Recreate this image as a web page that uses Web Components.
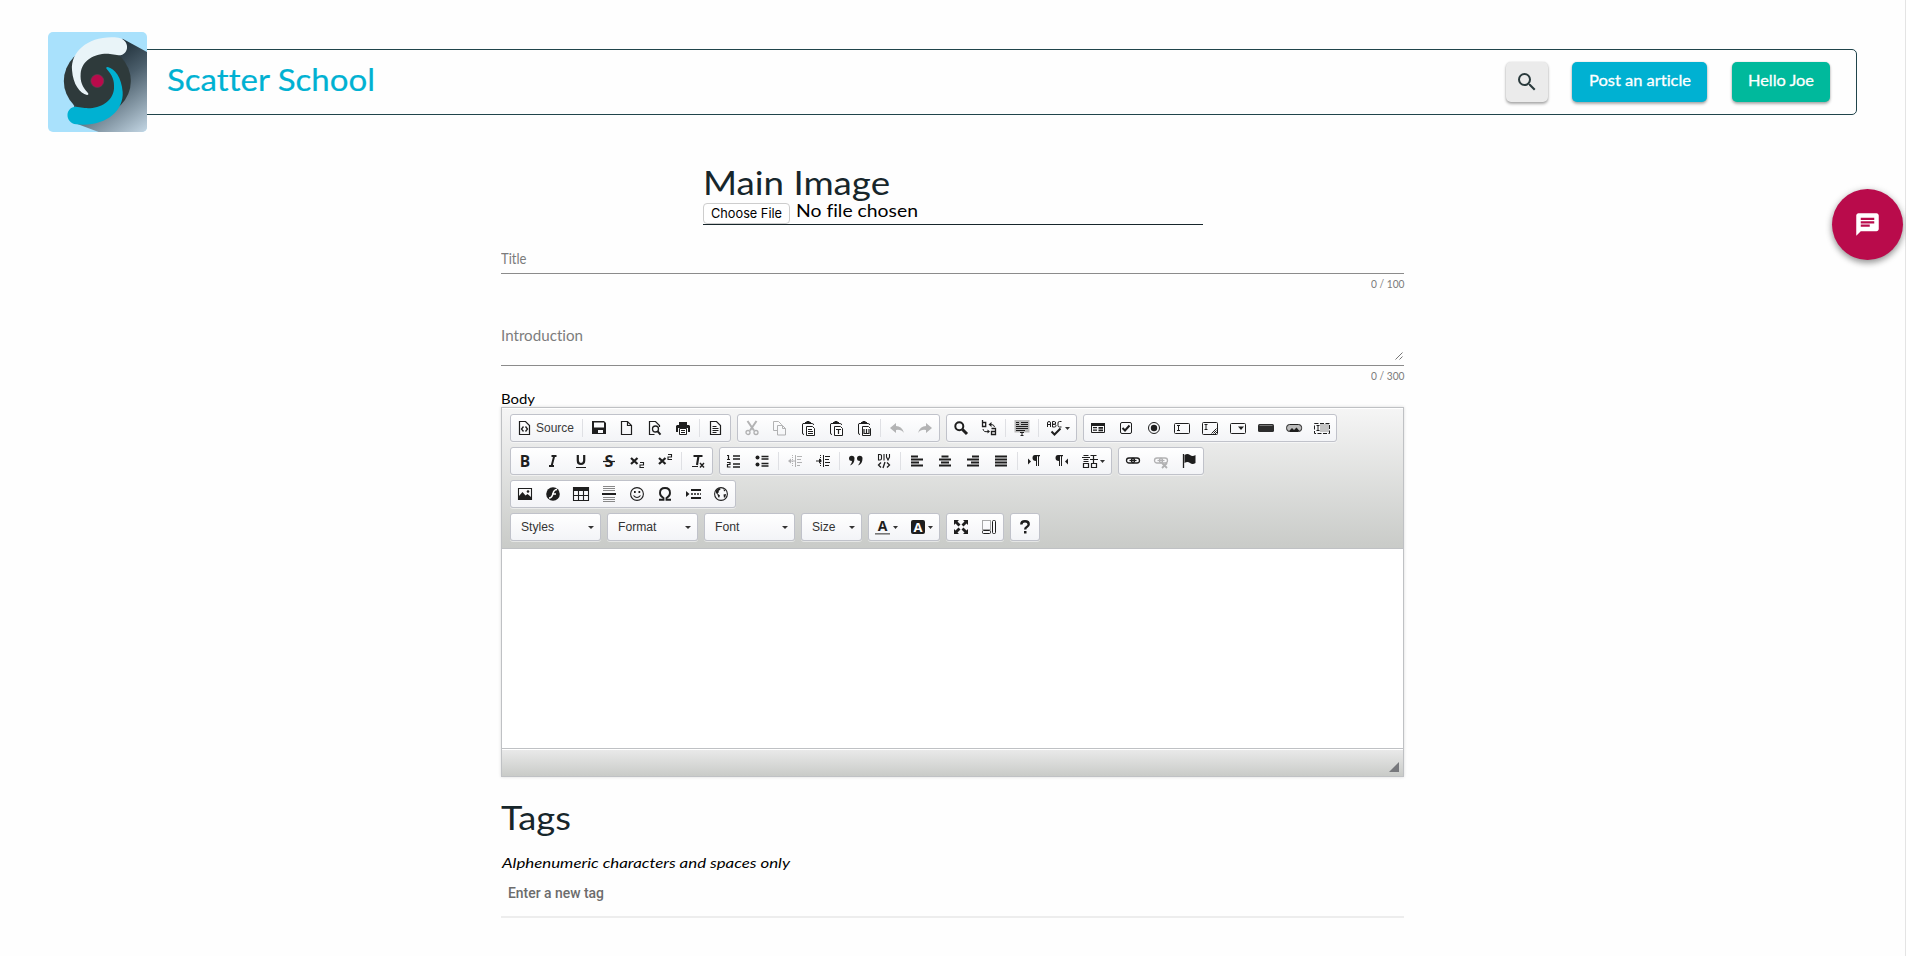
<!DOCTYPE html>
<html lang="en">
<head>
<meta charset="utf-8">
<title>Scatter School</title>
<style>
html,body{margin:0;height:100%;overflow:hidden;background:#fefefe}
body{font-family:"Century Gothic",Lato,sans-serif;font-variant-ligatures:none;color:#000}
</style>
</head>
<body>
<scatter-page></scatter-page>
<script>
const define = (name, html, init) => customElements.define(name, class extends HTMLElement {
  connectedCallback() {
    if (this.shadowRoot) return;
    this.attachShadow({mode: 'open'}).innerHTML = typeof html === 'function' ? html(this) : html;
    if (init) init(this);
  }
});

/* Text whose letters are widened to fill a given width. */
define('fit-text', '<style>:host{display:inline-block;white-space:nowrap;text-align:left;font-variant-ligatures:none}span{display:inline-block;transform-origin:0 50%}</style><span><slot></slot></span>', el => {
  const span = el.shadowRoot.querySelector('span');
  const width = Number(el.getAttribute('width'));
  const ratio = width / span.getBoundingClientRect().width;
  el.style.width = width + 'px';
  span.style.transform = `scaleX(${ratio.toFixed(4)})`;
});

define('site-logo', `<style>:host{display:block;width:99px;height:100px}svg{display:block;border-radius:5px}</style>
<svg width="99" height="100" viewBox="54 36 297 300">
<defs><linearGradient id="s" x1="200" y1="120" x2="350" y2="335" gradientUnits="userSpaceOnUse"><stop offset="0" stop-color="#1f2f39"/><stop offset=".35" stop-color="#4a5d6a"/><stop offset="1" stop-color="#c3d6e4"/></linearGradient>
<path id="arm" d="M265 53C180 44 122 92 126 150C129 194 150 220 171 225C177 225 176 221 172 217C158 200 150 188 152 160C156 118 200 98 240 102L266 106C300 105 300 58 265 53Z"/></defs>
<path fill="#a9e1fc" d="M54 36h297v300H54z"/>
<path fill="url(#s)" d="M278 56L351 96V336H206L140 311L120 180Z"/>
<circle cx="202" cy="183" r="100.500" fill="#2e3a3b"/>
<use href="#arm" fill="#e9f4f8"/><use href="#arm" fill="#00b1d2" transform="rotate(180 202 183)"/>
<circle cx="202" cy="183" r="19.500" fill="#ba0a4b" stroke="#5d4650" stroke-width="2"/>
</svg>`);

define('raised-button', `<style>
:host{display:flex;align-items:center;justify-content:center;box-sizing:border-box;height:40px;border-radius:5px;color:#fff;
font-size:15.500px;font-weight:400;-webkit-text-stroke:.3px currentColor;line-height:20px;box-shadow:0 2px 3px rgba(0,0,0,.32),0 0 2px rgba(0,0,0,.14)}
::slotted(fit-text){margin-bottom:4px}
</style><slot></slot>`);

define('site-header', `<style>
:host{display:flex;align-items:center;box-sizing:border-box;width:1809px;height:66px;border:1px solid #20444b;border-radius:5px;padding-right:26px}
site-logo{margin-left:-1px;flex:none}
h1{margin:0 0 6px 20px;font-size:31px;line-height:40px;font-weight:400;color:#00b1d2;flex:1;-webkit-text-stroke:.2px #00b1d2}
nav{display:flex}
.search{width:42px;background:#ebebeb;margin-right:24px}
.post{width:135px;background:#00b1d2;margin-right:25px}
.user{width:98px;background:#00b99c}
</style>
<site-logo></site-logo>
<h1><fit-text width="208">Scatter School</fit-text></h1>
<nav>
<raised-button class="search"><svg width="24" height="24" viewBox="0 0 24 24"><path fill="#2b3b3d" d="M15.500 14h-.790l-.280-.270A6.470 6.470 0 0 0 16 9.500 6.500 6.500 0 1 0 9.500 16c1.610 0 3.090-.590 4.230-1.570l.270.280v.790l5 4.990L20.490 19l-4.990-5zm-6 0C7.010 14 5 11.990 5 9.500S7.010 5 9.500 5 14 7.010 14 9.500 11.990 14 9.500 14z"/></svg></raised-button>
<raised-button class="post"><fit-text width="102">Post an article</fit-text></raised-button>
<raised-button class="user"><fit-text width="66">Hello Joe</fit-text></raised-button>
</nav>`);

define('chat-fab', `<style>
:host{display:flex;align-items:center;justify-content:center;width:71px;height:71px;border-radius:50%;background:#b90b4b;box-shadow:0 3px 6px rgba(0,0,0,.36),0 1px 8px rgba(0,0,0,.12)}
</style><svg width="27" height="27" viewBox="0 0 24 24"><path fill="#fff" d="M20 2H4c-1.100 0-1.990.900-1.990 2L2 22l4-4h14c1.100 0 2-.900 2-2V4c0-1.100-.900-2-2-2zM6 9h12v2H6V9zm8 5H6v-2h8v2zm4-6H6V6h12v2z"/></svg>`);

define('image-upload', `<style>
:host{display:block;width:500px;border-bottom:1px solid #17262b}
h2{margin:-1px 0 1px;font-size:33px;line-height:40px;font-weight:400;color:#17262b}
.row{display:flex;height:21px}
.btn{box-sizing:border-box;width:87px;height:21px;border:1px solid #cdcdcd;border-radius:4px;background:#fff;text-align:center;font:13px/19px Inter,sans-serif;color:#000}
.name{margin:-1px 0 0 6px;font-size:17.500px;line-height:18px}
</style>
<h2><fit-text width="187">Main Image</fit-text></h2>
<div class="row"><div class="btn"><fit-text width="71">Choose File</fit-text></div><div class="name"><fit-text width="122">No file chosen</fit-text></div></div>`);

define('text-field', el => `<style>
:host{display:block}
.box{box-sizing:border-box;height:${el.getAttribute('height')}px;border-bottom:1px solid #8b8b8b;font-size:14.500px;line-height:24px;color:#7c7c7c;display:flex;justify-content:space-between;align-items:flex-start}
.grip{align-self:flex-end;margin:0 1px 5px 0}
.count{margin-top:2px;text-align:right;font-size:10.800px;line-height:16px;color:#7c7c7c}
</style>
<div class="box"><fit-text width="${el.getAttribute('w')}">${el.getAttribute('label')}</fit-text>${el.hasAttribute('resizable') ? '<svg class="grip" width="8" height="8" viewBox="0 0 8 8"><path d="M.500 7.500l7-7M4.500 7.500l3-3" stroke="#666" stroke-width=".900"/></svg>' : ''}</div>
<div class="count"><fit-text width="33.500">0 / ${el.getAttribute('max')}</fit-text></div>`);

/* 16x16 toolbar glyphs */
const S = (d, w = 1) => `<path d="${d}" fill="none" stroke="currentColor" stroke-width="${w}"/>`;
const F = (d, x = '') => `<path d="${d}" fill="currentColor" ${x}/>`;
const doc = S('M2.500 1.500h6l4 4v9h-10zM8.500 1.500v4h4', 1.2);
const clip = S('M5 3.500H3Q2.500 3.500 2.500 5v8Q2.500 14.500 4 14.500M11 3.500h1.500Q13.500 3.500 13.500 5') + F('M5 2h1.500V1h3v1H11v2H5z') + '<path d="M6.500 6.500h6l2 2v7h-8z" fill="#fff" stroke="currentColor"/>';
const T = (x, y, size, t, extra = '') => `<text x="${x}" y="${y}" font-size="${size}" fill="currentColor" text-anchor="middle" ${extra}>${t}</text>`;
const link = '<rect x="1.500" y="5" width="8" height="5" rx="2.500" fill="none" stroke="currentColor" stroke-width="1.300"/><rect x="6.500" y="5" width="8" height="5" rx="2.500" fill="none" stroke="currentColor" stroke-width="1.300"/>' + S('M4.500 7.500h7', 1.2);
const pil = F('M8 2h6v1.200h-1V13h-1V3.200h-1V13h-1V8Q6.500 8 6.500 5 6.500 2 9 2z');
const ICONS = {
  source: S('M2.500 1.500h6l4 4v9h-10z', 1.2) + S('M6.500 6.500L4.500 9l2 2.500M8.500 6.500l2 2.500-2 2.500', 1.3),
  save: F('M1 1h12l2 2v11H1zM3 2.500v5h10v-5zM4 10v3h8v-3z', 'fill-rule="evenodd"') + F('M4 10h3v4H4z'),
  newpage: doc,
  preview: S('M12.500 7V5.500l-4-4h-6v13h5', 1.2) + '<circle cx="8.500" cy="9" r="3" fill="none" stroke="currentColor" stroke-width="1.300"/>' + S('M10.500 11.200l3 3.500', 2),
  print: F('M4 2h8v3H4zM2 5h12l1 1v6h-2V8H3v4H1V6z') + '<path d="M4.500 8.500h7v6h-7z" fill="#fff" stroke="currentColor"/>' + S('M6 10.500h4M6 12.500h4'),
  templates: S('M2.500 1.500h6l4 4v9h-10z', 1.2) + S('M4.500 6.500h4M4.500 8.500h6M4.500 10.500h6M4.500 12.500h4'),
  cut: S('M3.500 1l6.500 9.500M12.500 1L6 10.500', 2) + '<circle cx="4" cy="12.500" r="2" fill="none" stroke="currentColor" stroke-width="1.300"/><circle cx="12" cy="12.500" r="2" fill="none" stroke="currentColor" stroke-width="1.300"/>',
  copy: S('M5.500 10.500h-4v-9h5l3 3v1') + S('M5.500 5.500h5l3 3v6.500h-8zM10.500 5.500v3h3'),
  paste: clip + S('M8 9.500h4M8 11.500h5M8 13.500h5'),
  pastetext: clip + S('M8 9.500h5M10.500 9v5', 1.2),
  pasteword: clip + S('M8 9v4.500h5V9M10.500 9v4', 1.2),
  undo: F('M1 8l6-5v3q6 0 8 7-3-4-8-3v3z'),
  redo: F('M15 8L9 3v3q-6 0-8 7 3-4 8-3v3z'),
  find: '<circle cx="6.300" cy="6.300" r="4" fill="none" stroke="currentColor" stroke-width="2"/>' + S('M9.500 9.500l4.500 4.500', 3),
  replace: S('M1.500 0v6.500h3.200v-4H1.500M10.500 8.500h4v6h-4v-3h4', 1.3) + S('M8.500 4.500h2q2.500 0 3 2.500M2 9q.500 3.500 5 2.500') + F('M7.500 4.500l3-2.500v5zM9 11.500L6.500 9.500v4z'),
  selectall: '<path d="M.500 0h15v12.500H.500z" fill="#bbb"/>' + S('M2 2.500h3M2 4.500h3M7 2.500h7M7 4.500h7M2 6.500h12M2 8.500h12M2 10.500h9', 1.1) + S('M6 12.500h4M8 12.500v3M6.500 15.500h3'),
  spell: S('M.500 7V3q0-1.500 1.500-1.500T3.500 3v4M.500 4.500h3M5.500 1.500v5.500h2q1.500 0 1.500-1.300T7.500 4.300h-2 1.700Q8.700 4.300 8.700 3T7.300 1.500zM14.500 1.500h-2q-1.500 0-1.500 1.500v2.500Q11 7 12.500 7h2') + S('M4.500 11.500l3 3 6-6', 2),
  form: S('M1.500 3.500h13v9h-13z') + F('M1 3h14v3H1z') + F('M3 7h4v1.200H3zM3 9.500h4v1.200H3zM8.500 7H13v1.700H8.500zM8.500 9.500H13v1.700H8.500z'),
  checkbox: '<rect x="2.500" y="2.500" width="11" height="11" rx="1.500" fill="none" stroke="currentColor"/>' + S('M4.500 8l2.500 2.500 4.500-5', 2),
  radio: '<circle cx="8" cy="8" r="5.500" fill="none" stroke="currentColor"/><circle cx="8" cy="8" r="3.200" fill="currentColor"/>',
  textfield: '<rect x=".500" y="3.500" width="15" height="10" rx="1" fill="none" stroke="currentColor"/>' + S('M3 5.500h3M4.500 5.500v5M3 10.500h3'),
  textarea: '<rect x=".500" y="2.500" width="15" height="12" rx="1" fill="none" stroke="currentColor"/>' + S('M2.500 4.500h3M4 4.500v5M2.500 9.500h3M9.500 13.500l5-5M11.500 13.500l3-3M13 14l2-2'),
  select: '<rect x=".500" y="3.500" width="15" height="10" rx="1" fill="none" stroke="currentColor"/>' + F('M8 6.500h6L11 10z'),
  button: '<rect x="0" y="4" width="16" height="8" rx="1.500" fill="#2c2c2c"/><path d="M1.500 5.500h13" stroke="#777"/>',
  imagebutton: '<rect x=".600" y="4.500" width="15" height="7" rx="3" fill="#bbb" stroke="currentColor"/>' + F('M3 11l3-3 2 2 2.500-2.500 3 3.500z'),
  hidden: '<path d="M6 4h9v8H6z" fill="#c4c4c4"/><rect x=".500" y="3.500" width="15" height="10" fill="none" stroke="currentColor" stroke-dasharray="4 1.500"/>' + S('M2.500 5.500h3M4 5.500v5M2.500 10.500h3'),
  bold: T(8, 13.5, 15.5, 'B', 'font-weight="700" font-family="Open Sans"'),
  italic: S('M6.500 3h5M9.200 3L6.600 13M4 13h5', 2),
  underline: S('M4.800 2v5.500Q4.800 11 8 11t3.200-3.500V2', 2.2) + S('M3 14.500h10'),
  strike: T(8, 13.5, 16, 'S', 'font-weight="700" font-family="Open Sans"') + S('M2 8.500h12', 1.2),
  sub: S('M2 5l6.500 6M8.500 5L2 11', 2.2) + S('M11 9.500h3.500v2.500h-3.500v2.500h4', 1.1),
  sup: S('M2 5l6.500 6M8.500 5L2 11', 2.2) + S('M11 1.500h3.500V4h-3.500v2.500h4', 1.1),
  removefmt: S('M3.500 3h9M8.500 3L7 12', 2.1) + S('M2 13.500h6') + S('M10 10l4 4.500M14 10l-4 4.500', 1.4),
  numbered: S('M1 2.500h1.500V6.500M1 6.500h3M1 9.500h3v2H1.500v2.500h3', 1.2) + S('M7 3h7M7 6h7M7 11h7M7 14h7', 1.4),
  bulleted: '<circle cx="3.500" cy="4.500" r="2" fill="currentColor"/><circle cx="3.500" cy="11.500" r="2" fill="currentColor"/>' + S('M7.500 3.500h7M7.500 6h7M7.500 10.500h7M7.500 13h7', 1.4),
  outdent: S('M8.500 2v12') + S('M10 3.500h5M10 6.500h4M10 9.500h5M10 12.500h3M2 8h6') + F('M1 8l3-2.500v5z') + '<path d="M5.500 2v12" stroke="currentColor" stroke-dasharray="1 1"/>',
  indent: S('M8.500 2v12') + S('M10 3.500h5M10 6.500h4M10 9.500h5M10 12.500h4M1 8h4') + F('M7 8L4 5.500v5z') + '<path d="M5.500 2v12" stroke="currentColor" stroke-dasharray="1 1"/>',
  quote: F('M1 5.500a2.700 2.700 0 1 1 5.500 0Q6.500 11 2 12.500 4 10.500 4 8 1 8 1 5.500zM9 5.500a2.700 2.700 0 1 1 5.500 0Q14.500 11 10 12.500 12 10.500 12 8 9 8 9 5.500z'),
  div: S('M2.500 1v6h1.500q1.500 0 1.500-1.500v-3Q5.500 1.500 4 1.500H2.500M8 1v6.500M10.500 1v3l1.500 3 1.500-3V1', 1.1) + S('M5 9.500L2.500 12 5 14.500M11 9.500l2.500 2.500-2.500 2.500M9 9l-2 6', 1.3),
  left: S('M2 3.500h7M2 6.500h12M2 9.500h8M2 12.500h12', 2),
  center: S('M4.500 3.500h7M2 6.500h12M4 9.500h8M2 12.500h12', 2),
  right: S('M7 3.500h7M2 6.500h12M6 9.500h8M2 12.500h12', 2),
  justify: S('M2 3.500h12M2 6.500h12M2 9.500h12M2 12.500h12', 2),
  ltr: F('M2 5.500L5 8.500 2 11.500z') + pil,
  rtl: F('M14 5.500L11 8.500l3 3z') + `<g transform="translate(-5 0)">${pil}</g>`,
  language: S('M1.500 2.500h5M0 4.500h8M1.500 6.500h5M1.500 8.500h5M1.500 10.500h5v4h-5zM8.500 2.500h6M8 6.500h8M11.500 2.500v8M9.500 10.500h5v4h-5z', 1.2),
  link, unlink: link + S('M9 10l5 5M14 10l-5 5', 1.8),
  anchor: S('M2.500 1v14', 1.3) + F('M3.500 2q3-2 5.500 0t5.500 0v8q-3 2-5.500 0t-5.500 0z'),
  image: S('M1.500 2.500h13v11h-13z', 1.1) + F('M2 13v-3l3.500-4 3 3.500 2-1.500L14 11v2z') + '<circle cx="11" cy="5.500" r="1.300" fill="currentColor"/>',
  flash: '<circle cx="8" cy="8" r="6.800" fill="currentColor"/><path d="M12 3.500q-3 0-4 4-1 4.500-4 4.500M7 8h4" fill="none" stroke="#fff" stroke-width="1.500"/>',
  table: F('M0 1h16v4H0z') + S('M.500 1.500h15v13H.500zM5.500 5v9.500M10.500 5v9.500M0 9.500h16', 1.1),
  hr: '<path d="M2 .500h12M2 2.500h12M2 4.500h12M2 11.500h12M2 13.500h12M2 15.500h12" stroke="#888"/>' + S('M1 8h14', 2),
  smile: '<circle cx="8" cy="8" r="6.400" fill="none" stroke="currentColor" stroke-width="1.100"/>' + F('M5 5h1.700v2H5zM9.500 5h1.700v2H9.500z') + S('M4.500 9.500Q8 13.500 11.500 9.500', 1.1),
  omega: S('M2 13.800h4.500v-1.800Q3 10 3 7q0-5 5-5T13 7q0 3-3.500 5v1.800H14', 1.9),
  pagebreak: F('M1 5l3.500 3L1 11z') + S('M6 4h10M6 12h10', 2) + '<path d="M6 8h10" stroke="currentColor" stroke-width="1.400" stroke-dasharray="2 1"/>',
  iframe: '<circle cx="8" cy="8" r="6.400" fill="none" stroke="currentColor" stroke-width="1.100"/>' + F('M3 4.500Q4.500 2.500 7 2L7.500 3.500 5.500 5 6 6 4.500 7.500 7 9.500 6 12Q4.800 10.500 4.500 8.500L3 7zM10.500 3l2 1.500-1.500 1zM10.500 8.500l2.500-.500-.500 2.500-1.500 1.500z'),
  color: T(7.5, 12, 14, 'A', 'font-weight="700" font-family="Open Sans"') + '<path d="M0 14.800h15" stroke="#777" stroke-width="1.600"/>',
  bgcolor: '<rect x="1" y="1" width="14" height="14" rx="2" fill="currentColor"/><text x="8" y="13" font-size="13" font-weight="700" font-family="Open Sans" text-anchor="middle" fill="#fff">A</text>',
  maximize: F('M1 1h5L4.500 2.500l3 3-2 2-3-3L1 6zM15 1v5l-1.500-1.500-3 3-2-2 3-3L10 1zM1 15v-5l1.500 1.500 3-3 2 2-3 3L6 15zM15 15h-5l1.500-1.500-3-3 2-2 3 3L15 10z'),
  blocks: '<path d="M1.500 1.500h8v9h-8z" fill="none" stroke="#555" stroke-dasharray="1 1"/><rect x="11.500" y="1.500" width="3" height="13" rx="1" fill="none" stroke="currentColor"/><rect x="1.500" y="11.500" width="8" height="3" rx="1" fill="none" stroke="currentColor"/>',
  about: S('M4.300 5.500Q4.300 2.300 8 2.300t3.700 3Q11.700 7 9.800 8 8.200 8.800 8.200 10.500', 2.4) + F('M7 12h2.500v2.500H7z')
};

define('ck-button', el => `<style>
:host{display:flex;align-items:center;height:26px;padding:0 6px;color:#1e1e1e;font:12px/26px "Liberation Sans",sans-serif}
svg{flex:none;overflow:visible}
.off{opacity:.32}
.label{color:#3b3b3b;margin-left:3px;width:38px}
.arrow{margin:1px 0 0 2px;width:5px}
</style>
<svg class="${el.hasAttribute('off') ? 'off' : ''}" width="16" height="16" viewBox="0 0 16 16">${ICONS[el.getAttribute('icon')]}</svg>${el.hasAttribute('label') ? `<span class="label"><fit-text width="38">${el.getAttribute('label')}</fit-text></span>` : ''}${el.hasAttribute('menu') ? '<svg class="arrow" width="5" height="3" viewBox="0 0 5 3"><path d="M0 0h5L2.500 3z" fill="#333"/></svg>' : ''}`);

define('ck-group', `<style>
:host{display:flex;box-sizing:border-box;height:28px;border:1px solid #c0c2ca;border-radius:3px;background:linear-gradient(#fff,#f3f4f7);box-shadow:0 1px 0 rgba(255,255,255,.5)}
::slotted(i){width:1px;height:18px;margin:4px 2px 0;background:#dfe0e4}
::slotted(ck-button[menu]){width:23px}
</style><slot></slot>`);

define('ck-combo', el => `<style>
:host{display:flex;align-items:center;justify-content:space-between;box-sizing:border-box;width:${el.getAttribute('size')}px;height:28px;padding:0 6px 0 10px;border:1px solid #c0c2ca;border-radius:3px;background:linear-gradient(#fff,#f3f4f7);box-shadow:0 1px 0 rgba(255,255,255,.5);font:12px/26px "Liberation Sans",sans-serif;color:#333}
fit-text{margin-bottom:1px}
</style><fit-text width="${el.getAttribute('w')}">${el.getAttribute('label')}</fit-text><svg width="6" height="3" viewBox="0 0 6 3"><path d="M0 0h6L3 3z" fill="#333"/></svg>`);

const group = spec => '<ck-group>' + spec.split(' ').map(s => {
  if (s === '|') return '<i></i>';
  const off = s.startsWith('-'), menu = s.endsWith('+'), name = s.replace(/[-+]/g, '');
  return `<ck-button icon="${name}"${off ? ' off' : ''}${menu ? ' menu' : ''}${name === 'source' ? ' label="Source"' : ''}></ck-button>`;
}).join('') + '</ck-group>';

define('rich-editor', `<style>
:host{display:flex;flex-direction:column;box-sizing:border-box;height:370px;border:1px solid #bfc1c4;box-shadow:0 0 3px rgba(0,0,0,.15)}
.bar{box-sizing:border-box;height:141px;display:flex;flex-direction:column;gap:5px;padding:5px 8px 0;border-top:1px solid #fff;border-bottom:1px solid #bfc1c4;background:linear-gradient(#f5f5f5,#c9cbc8)}
.row{display:flex;gap:6px}
.page{flex:1;background:#fff}
.foot{box-sizing:border-box;height:28px;border-top:1px solid #bfc1c4;background:linear-gradient(#fff 1px,#e9e9e9 1px,#c9cbc8);display:flex;justify-content:flex-end;align-items:flex-end;padding:0 4px 4px 0}
</style>
<div class="bar">
<div class="row">${group('source | save newpage preview print | templates')}${group('-cut -copy paste pastetext pasteword | -undo -redo')}${group('find replace | selectall | spell+')}${group('form checkbox radio textfield textarea select button imagebutton hidden')}</div>
<div class="row">${group('bold italic underline strike sub sup | removefmt')}${group('numbered bulleted | -outdent indent | quote div | left center right justify | ltr rtl language+')}${group('link -unlink anchor')}</div>
<div class="row">${group('image flash table hr smile omega pagebreak iframe')}</div>
<div class="row"><ck-combo label="Styles" w="33" size="91"></ck-combo><ck-combo label="Format" w="38.500" size="91"></ck-combo><ck-combo label="Font" w="24.500" size="91"></ck-combo><ck-combo label="Size" w="23.500" size="61"></ck-combo>${group('color+ bgcolor+')}${group('maximize blocks')}${group('about')}</div>
</div>
<div class="page"></div>
<div class="foot"><svg width="10" height="10" viewBox="0 0 10 10"><path d="M10 0v10H0z" fill="#77787c"/></svg></div>`);

define('tag-input', `<style>
:host{display:block}
h2{margin:0;font-size:33px;line-height:40px;font-weight:400;color:#17262b}
p{margin:16px 0 0 1px;font-size:14px;line-height:20px;font-style:italic}
.entry{box-sizing:border-box;height:35px;margin-top:10px;padding-left:7px;border-bottom:2px solid #ededed;font:500 14px/20px Roboto,sans-serif;color:#6c6c6c}
</style>
<h2><fit-text width="70">Tags</fit-text></h2>
<p><fit-text width="288">Alphenumeric characters and spaces only</fit-text></p>
<div class="entry"><fit-text width="96">Enter a new tag</fit-text></div>`);

define('scatter-page', `<style>
:host{display:block;position:relative;box-sizing:border-box;width:1906px;height:956px;padding:49px 0 0 48px;border-right:1px solid #e4e4e4}
image-upload{margin:48px 0 0 655px}
main{width:903px;margin:22px 0 0 453px}
text-field+text-field{margin-top:32px}
label{display:block;margin-top:7px;font-size:14px;line-height:16px;height:16px}
tag-input{margin-top:20px}
chat-fab{position:absolute;left:1832px;top:189px}
</style>
<site-header></site-header>
<image-upload></image-upload>
<main>
<text-field label="Title" w="25.500" height="27" max="100"></text-field>
<text-field label="Introduction" w="82" height="42" max="300" resizable></text-field>
<label><fit-text width="34">Body</fit-text></label>
<rich-editor></rich-editor>
<tag-input></tag-input>
</main>
<chat-fab></chat-fab>`);
</script>
</body>
</html>
